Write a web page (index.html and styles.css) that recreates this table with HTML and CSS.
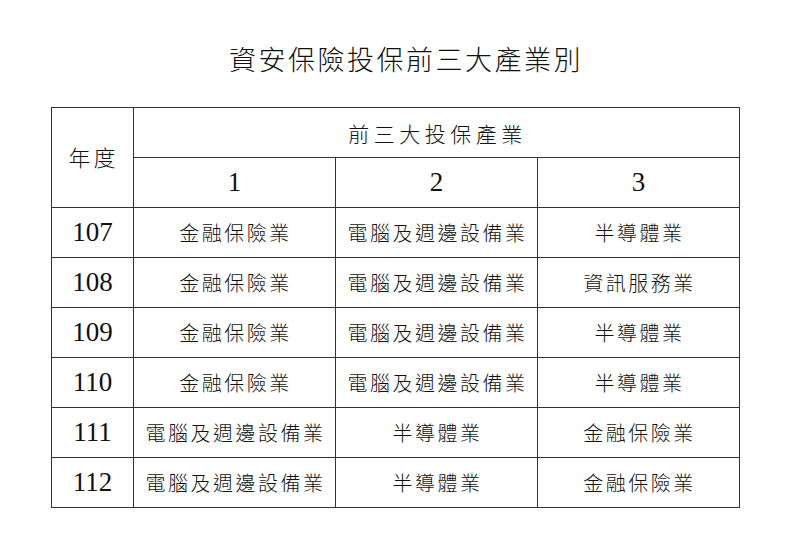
FILE: index.html
```html
<!DOCTYPE html>
<html lang="zh-Hant">
<head>
<meta charset="utf-8">
<title>資安保險投保前三大產業別</title>
<link rel="stylesheet" href="styles.css">
</head>
<body>
<div class="page">
  <h1 class="title">資安保險投保前三大產業別</h1>
  <table class="grid">
    <colgroup>
      <col class="c-year">
      <col class="c-rank">
      <col class="c-rank">
      <col class="c-rank">
    </colgroup>
    <thead>
      <tr>
        <th rowspan="2" class="year-head">年度</th>
        <th colspan="3" class="group-head">前三大投保產業</th>
      </tr>
      <tr>
        <th class="num">1</th>
        <th class="num">2</th>
        <th class="num">3</th>
      </tr>
    </thead>
    <tbody>
      <tr><td class="num">107</td><td>金融保險業</td><td>電腦及週邊設備業</td><td>半導體業</td></tr>
      <tr><td class="num">108</td><td>金融保險業</td><td>電腦及週邊設備業</td><td>資訊服務業</td></tr>
      <tr><td class="num">109</td><td>金融保險業</td><td>電腦及週邊設備業</td><td>半導體業</td></tr>
      <tr><td class="num">110</td><td>金融保險業</td><td>電腦及週邊設備業</td><td>半導體業</td></tr>
      <tr><td class="num">111</td><td>電腦及週邊設備業</td><td>半導體業</td><td>金融保險業</td></tr>
      <tr><td class="num">112</td><td>電腦及週邊設備業</td><td>半導體業</td><td>金融保險業</td></tr>
    </tbody>
  </table>
</div>
</body>
</html>
```

FILE: styles.css
```css
html, body {
  margin: 0;
  padding: 0;
  background: #ffffff;
}

.page {
  width: 800px;
  height: 545px;
  display: flex;
  flex-direction: column;
  align-items: flex-start;
  font-family: "Liberation Serif", "Noto Sans CJK TC", serif;
  color: #111111;
}

.title {
  align-self: stretch;
  margin: 44px 0 0 0;
  padding-left: 12px;
  height: 30px;
  line-height: 30px;
  text-align: center;
  font-family: "Noto Sans CJK TC", sans-serif;
  font-weight: 300;
  font-size: 27px;
  letter-spacing: 2.5px;
}

.grid {
  margin: 33px 0 0 51px;
  width: 689px;
  border-collapse: collapse;
  table-layout: fixed;
}

.c-year { width: 82px; }
.c-rank { width: 202px; }

.grid th,
.grid td {
  border: 1.5px solid #333333;
  height: 49px;
  padding: 0;
  text-align: center;
  vertical-align: middle;
  font-weight: 300;
  font-family: "Noto Sans CJK TC", sans-serif;
  font-size: 20px;
  letter-spacing: 2.5px;
  padding-left: 2px;
}

.grid .num {
  font-family: "Liberation Serif", serif;
  font-weight: 400;
  font-size: 27px;
  letter-spacing: 0;
  padding-left: 0;
}

.grid .year-head {
  font-size: 22px;
  letter-spacing: 3px;
  padding-bottom: 4px;
}

.grid .group-head {
  font-size: 21px;
  letter-spacing: 4.5px;
}
```
